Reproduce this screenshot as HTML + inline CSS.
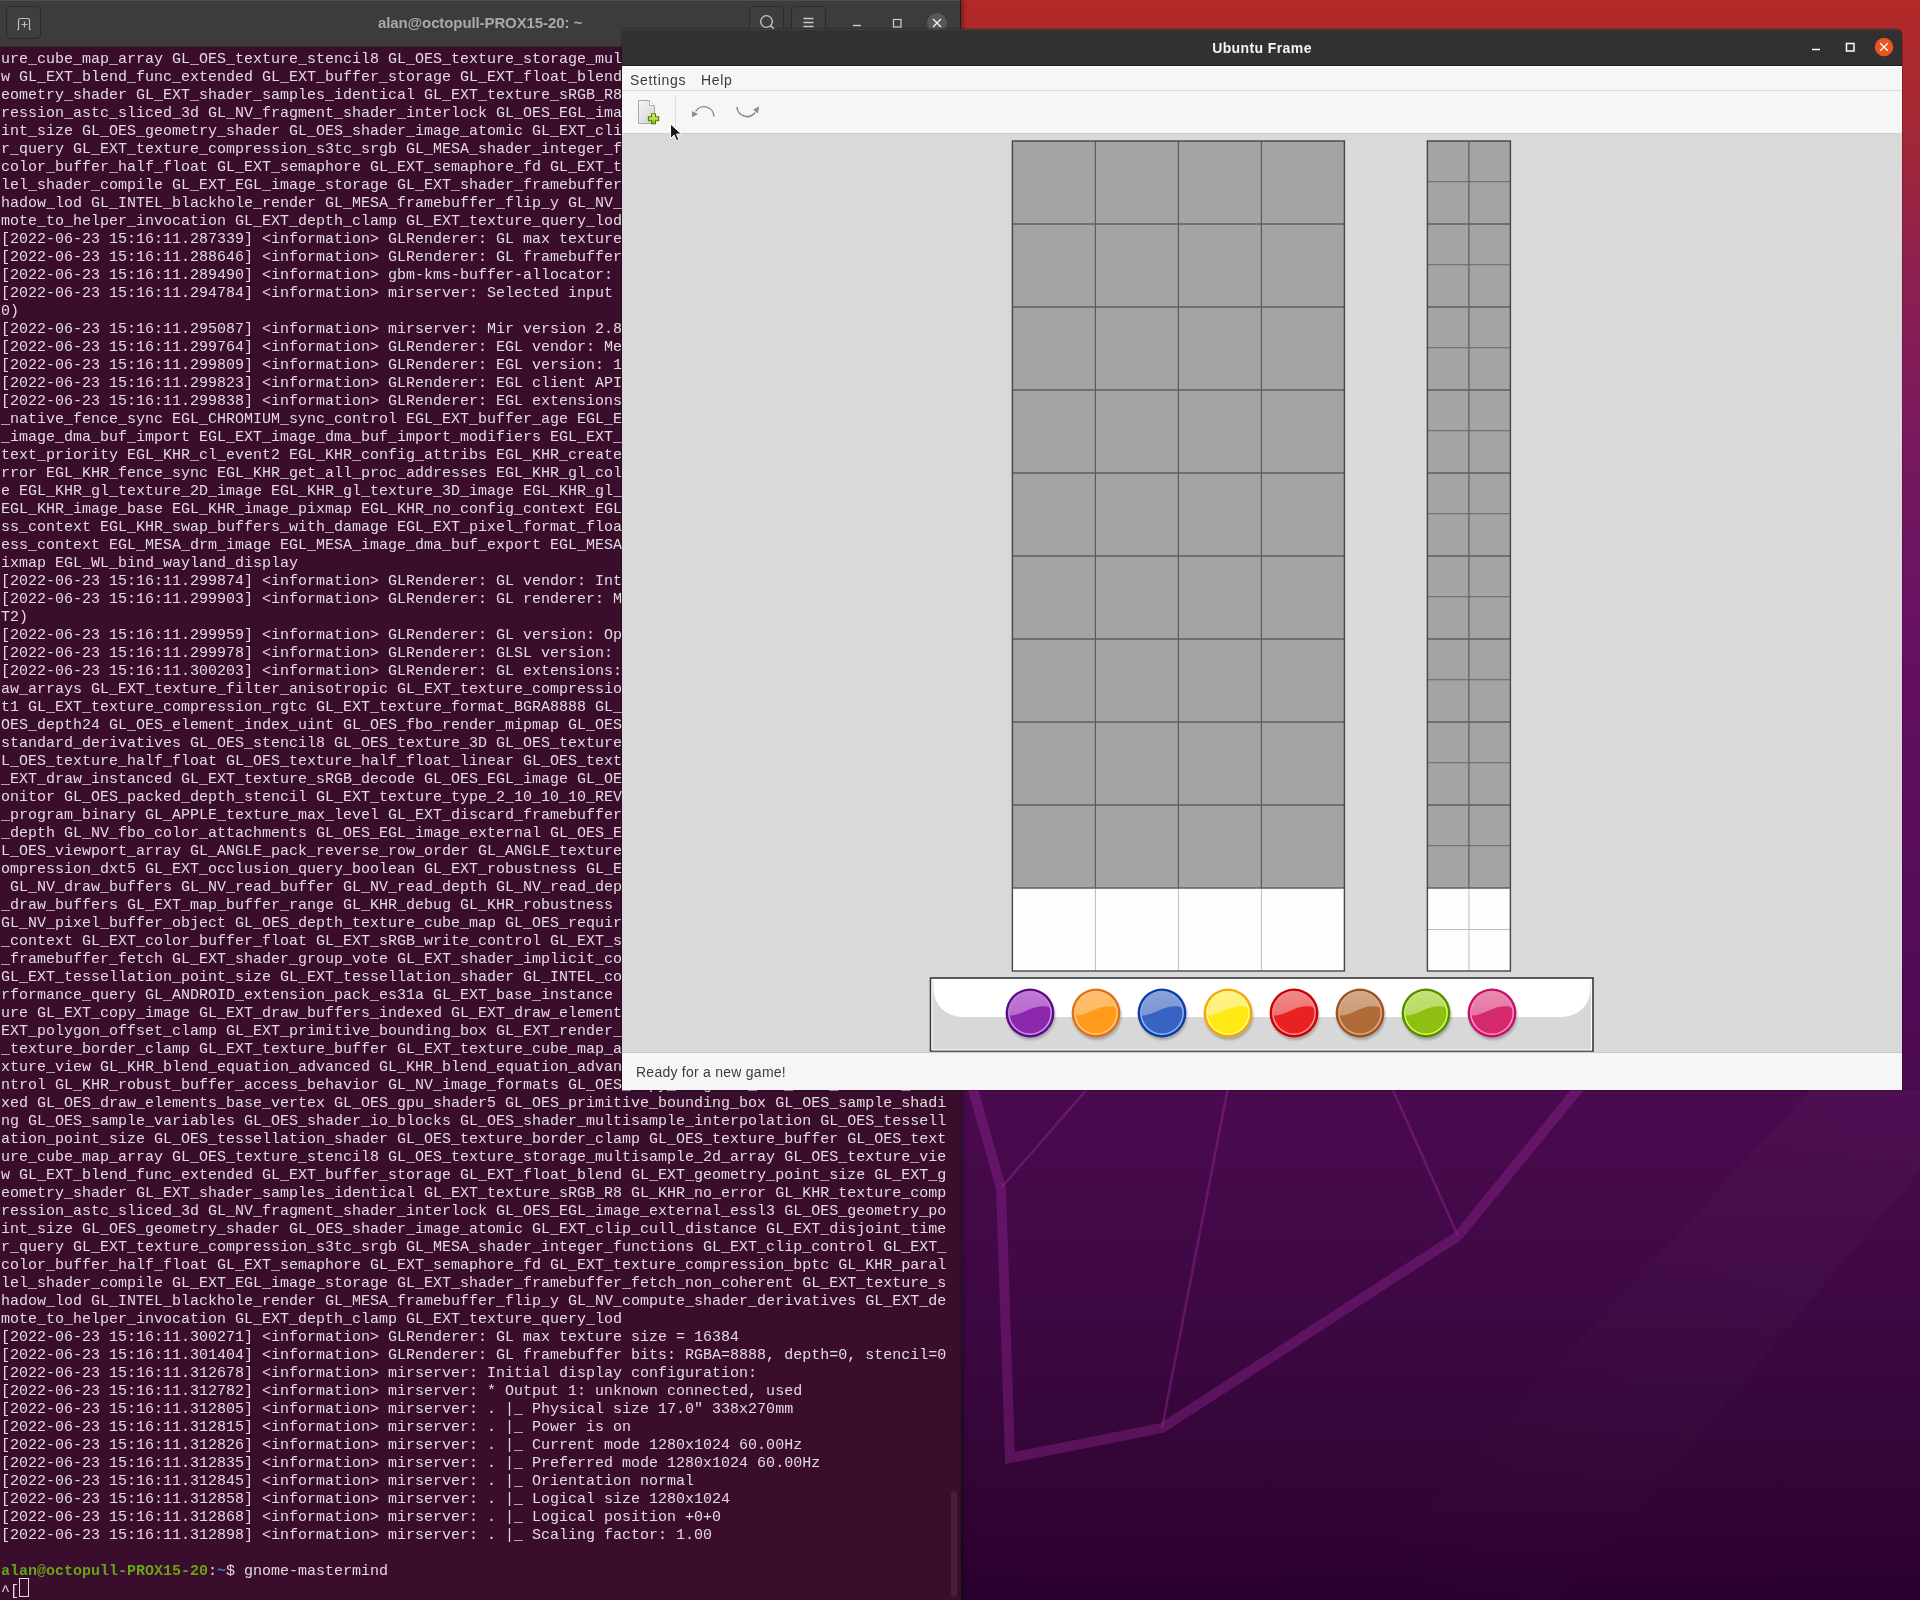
<!DOCTYPE html>
<html><head><meta charset="utf-8">
<style>
*{margin:0;padding:0;box-sizing:border-box}
html,body{width:1920px;height:1600px;overflow:hidden;background:#3a0a40}
body{position:relative;font-family:"Liberation Sans",sans-serif}
.abs{position:absolute}
#desk{left:0;top:0;width:1920px;height:1600px;
 background:linear-gradient(180deg,#b22a28 0px,#a52834 120px,#8e2050 270px,#7c1a5c 410px,#6e1462 550px,#620f62 700px,#5a0d5c 830px,#500b54 1000px,#4a0a4e 1100px,#3e0844 1300px,#340638 1450px,#2a0030 1600px)}
#term{left:0;top:0;width:961px;height:1600px;background:#3a0d2c;border-right:1px solid #1e1a1e;box-shadow:2px 0 5px rgba(0,0,0,0.35)}
#ttb{left:0;top:0;width:960px;height:47px;background:#3c3c3c;border-top:1px solid #4e4e4e;border-bottom:1px solid #2c2c2c}
.tbtn{position:absolute;top:5px;width:35px;height:33px;border:1px solid #2a2a2a;border-radius:5px;background:#3e3e3e}
#ttitle{will-change:transform;left:0;top:13px;width:960px;text-align:center;font-weight:bold;font-size:15px;color:#a9a9a9;letter-spacing:-0.1px}
#tpre{will-change:transform;left:1px;top:51px;font-family:"Liberation Mono",monospace;font-size:15px;line-height:18px;color:#e2dadf;white-space:pre}
.pg{color:#66a416;font-weight:bold}
.pb{color:#4580c8;font-weight:bold}
.cur{display:inline-block;width:10px;height:19px;border:1px solid #e2dadf;vertical-align:-5px;position:relative;top:-3.5px;margin-left:-0.5px}
#sb{left:951px;top:1491px;width:6px;height:106px;border-radius:3px;background:#471e39}
#frame{left:622px;top:29px;width:1280px;height:1061px;border-radius:6px 6px 0 0;overflow:hidden;box-shadow:0 0 0 1px rgba(0,0,0,0.22);}
#ftb{left:0;top:0;width:1280px;height:37px;background:#323031;border-bottom:1px solid #1c1c1c;box-shadow:inset 0 1px 0 rgba(255,255,255,0.08)}
#ftitle{will-change:transform;left:0;top:11px;width:1280px;text-align:center;color:#f4f4f4;font-weight:bold;font-size:14px;letter-spacing:0.4px}
#menu{left:0;top:37px;width:1280px;height:25px;background:#f6f6f6;border-top:1px solid #ffffff;border-bottom:1px solid #dadada}
.mi{will-change:transform;position:absolute;top:5px;font-size:14px;letter-spacing:0.7px;color:#3b3b3b}
#tool{left:0;top:62px;width:1280px;height:43px;background:#f6f6f6;border-bottom:1px solid #cfcfcf}
#status{left:0;top:1023px;width:1280px;height:38px;background:#f6f6f6;border-top:1px solid #c9c9c9}
#stext{will-change:transform;left:14px;top:11px;font-size:14px;letter-spacing:0.25px;color:#3c3c3c}
</style></head><body>
<div id="desk" class="abs">
<svg width="1920" height="1600" style="position:absolute;left:0;top:0">
<defs><linearGradient id="band" x1="1" y1="0" x2="0" y2="1"><stop offset="0" stop-color="#fff" stop-opacity="0.022"/><stop offset="1" stop-color="#fff" stop-opacity="0.0"/></linearGradient></defs>
<polygon points="1810,1090 1920,1090 1920,1170 1560,1600 1340,1600" fill="url(#band)"/>
<g fill="none" stroke-linejoin="miter">
<polyline points="968,1072 1001,1188 1010,1458 1162,1428 1458,1236 1592,1072" stroke="rgb(150,40,150)" stroke-opacity="0.38" stroke-width="10"/>
<line x1="1001" y1="1188" x2="1102" y2="1072" stroke="rgb(150,40,150)" stroke-opacity="0.42" stroke-width="2.6"/>
<line x1="1162" y1="1428" x2="1231" y2="1072" stroke="rgb(150,40,150)" stroke-opacity="0.42" stroke-width="2.6"/>
<line x1="1458" y1="1236" x2="1385" y2="1072" stroke="rgb(150,40,150)" stroke-opacity="0.42" stroke-width="2.6"/>
</g>
</svg>
</div>

<div id="term" class="abs">
 <div id="ttb" class="abs">
  <div class="tbtn" style="left:6px">
   <svg width="35" height="33" style="position:absolute;left:-1px;top:-1px"><path d="M11,23.5 h1.5 v-9 a2,2 0 0 1 2,-2 h7 a2,2 0 0 1 2,2 v9 h1.5" fill="none" stroke="#bdbdbd" stroke-width="1.2"/><path d="M18.5,15.5 v6 M15.5,18.5 h6" stroke="#bdbdbd" stroke-width="1.2"/></svg>
  </div>
  <div id="ttitle" class="abs">alan@octopull-PROX15-20: ~</div>
  <div class="tbtn" style="left:749px">
   <svg width="35" height="33" style="position:absolute;left:-1px;top:-1px"><circle cx="17.5" cy="15.5" r="5.8" fill="none" stroke="#c8c8c8" stroke-width="1.3"/><path d="M21.5,19.5 l3.5,3.5" stroke="#c8c8c8" stroke-width="1.6"/></svg>
  </div>
  <div class="tbtn" style="left:791px">
   <svg width="35" height="33" style="position:absolute;left:-1px;top:-1px"><path d="M12.5,12.5 h10 M12.5,16.5 h10 M12.5,20.5 h10" stroke="#c8c8c8" stroke-width="1.3"/></svg>
  </div>
  <svg width="960" height="46" style="position:absolute;left:0;top:-1px">
   <path d="M853,25.5 h8" stroke="#d0d0d0" stroke-width="1.3"/>
   <rect x="893.5" y="19.5" width="7.5" height="7.5" fill="none" stroke="#d0d0d0" stroke-width="1.2"/>
   <circle cx="937" cy="23" r="10" fill="#575757"/>
   <path d="M933,19 l8,8 M941,19 l-8,8" stroke="#f0f0f0" stroke-width="1.4"/>
  </svg>
 </div>
 <div id="tpre" class="abs">ure_cube_map_array GL_OES_texture_stencil8 GL_OES_texture_storage_multisample_2d_array GL_OES_texture_vie
w GL_EXT_blend_func_extended GL_EXT_buffer_storage GL_EXT_float_blend GL_EXT_geometry_point_size GL_EXT_g
eometry_shader GL_EXT_shader_samples_identical GL_EXT_texture_sRGB_R8 GL_KHR_no_error GL_KHR_texture_comp
ression_astc_sliced_3d GL_NV_fragment_shader_interlock GL_OES_EGL_image_external_essl3 GL_OES_geometry_po
int_size GL_OES_geometry_shader GL_OES_shader_image_atomic GL_EXT_clip_cull_distance GL_EXT_disjoint_time
r_query GL_EXT_texture_compression_s3tc_srgb GL_MESA_shader_integer_functions GL_EXT_clip_control GL_EXT_
color_buffer_half_float GL_EXT_semaphore GL_EXT_semaphore_fd GL_EXT_texture_compression_bptc GL_KHR_paral
lel_shader_compile GL_EXT_EGL_image_storage GL_EXT_shader_framebuffer_fetch_non_coherent GL_EXT_texture_s
hadow_lod GL_INTEL_blackhole_render GL_MESA_framebuffer_flip_y GL_NV_compute_shader_derivatives GL_EXT_de
mote_to_helper_invocation GL_EXT_depth_clamp GL_EXT_texture_query_lod
[2022-06-23 15:16:11.287339] &lt;information&gt; GLRenderer: GL max texture size = 16384
[2022-06-23 15:16:11.288646] &lt;information&gt; GLRenderer: GL framebuffer bits: RGBA=8888, depth=0, stencil=0
[2022-06-23 15:16:11.289490] &lt;information&gt; gbm-kms-buffer-allocator: Failed to initialise EGLStreams: No
[2022-06-23 15:16:11.294784] &lt;information&gt; mirserver: Selected input driver: mir:x11-input (version: 2.8.
0)
[2022-06-23 15:16:11.295087] &lt;information&gt; mirserver: Mir version 2.8.0
[2022-06-23 15:16:11.299764] &lt;information&gt; GLRenderer: EGL vendor: Mesa Project
[2022-06-23 15:16:11.299809] &lt;information&gt; GLRenderer: EGL version: 1.4
[2022-06-23 15:16:11.299823] &lt;information&gt; GLRenderer: EGL client APIs: OpenGL OpenGL_ES
[2022-06-23 15:16:11.299838] &lt;information&gt; GLRenderer: EGL extensions: EGL_ANDROID_blob_cache EGL_ANDROID
_native_fence_sync EGL_CHROMIUM_sync_control EGL_EXT_buffer_age EGL_EXT_create_context_robustness EGL_EXT
_image_dma_buf_import EGL_EXT_image_dma_buf_import_modifiers EGL_EXT_swap_buffers_with_damage EGL_IMG_con
text_priority EGL_KHR_cl_event2 EGL_KHR_config_attribs EGL_KHR_create_context EGL_KHR_create_context_no_e
rror EGL_KHR_fence_sync EGL_KHR_get_all_proc_addresses EGL_KHR_gl_colorspace EGL_KHR_gl_renderbuffer_imag
e EGL_KHR_gl_texture_2D_image EGL_KHR_gl_texture_3D_image EGL_KHR_gl_texture_cubemap_image EGL_KHR_image 
EGL_KHR_image_base EGL_KHR_image_pixmap EGL_KHR_no_config_context EGL_KHR_reusable_sync EGL_KHR_surfacele
ss_context EGL_KHR_swap_buffers_with_damage EGL_EXT_pixel_format_float EGL_KHR_wait_sync EGL_MESA_configl
ess_context EGL_MESA_drm_image EGL_MESA_image_dma_buf_export EGL_MESA_query_driver EGL_NOK_texture_from_p
ixmap EGL_WL_bind_wayland_display
[2022-06-23 15:16:11.299874] &lt;information&gt; GLRenderer: GL vendor: Intel
[2022-06-23 15:16:11.299903] &lt;information&gt; GLRenderer: GL renderer: Mesa Intel(R) UHD Graphics 620 (KBL G
T2)
[2022-06-23 15:16:11.299959] &lt;information&gt; GLRenderer: GL version: OpenGL ES 3.2 Mesa 21.2.6
[2022-06-23 15:16:11.299978] &lt;information&gt; GLRenderer: GLSL version: OpenGL ES GLSL ES 3.20
[2022-06-23 15:16:11.300203] &lt;information&gt; GLRenderer: GL extensions: GL_EXT_blend_minmax GL_EXT_multi_dr
aw_arrays GL_EXT_texture_filter_anisotropic GL_EXT_texture_compression_dxt1 GL_EXT_texture_compression_dx
t1 GL_EXT_texture_compression_rgtc GL_EXT_texture_format_BGRA8888 GL_OES_compressed_ETC1_RGB8_texture GL_
OES_depth24 GL_OES_element_index_uint GL_OES_fbo_render_mipmap GL_OES_mapbuffer GL_OES_rgb8_rgba8 GL_OES_
standard_derivatives GL_OES_stencil8 GL_OES_texture_3D GL_OES_texture_float GL_OES_texture_float_linear G
L_OES_texture_half_float GL_OES_texture_half_float_linear GL_OES_texture_npot GL_OES_vertex_half_float GL
_EXT_draw_instanced GL_EXT_texture_sRGB_decode GL_OES_EGL_image GL_OES_depth_texture GL_AMD_performance_m
onitor GL_OES_packed_depth_stencil GL_EXT_texture_type_2_10_10_10_REV GL_NV_conditional_render GL_OES_get
_program_binary GL_APPLE_texture_max_level GL_EXT_discard_framebuffer GL_EXT_read_format_bgra GL_NV_pack
_depth GL_NV_fbo_color_attachments GL_OES_EGL_image_external GL_OES_EGL_sync GL_OES_vertex_array_object G
L_OES_viewport_array GL_ANGLE_pack_reverse_row_order GL_ANGLE_texture_compression_dxt3 GL_ANGLE_texture_c
ompression_dxt5 GL_EXT_occlusion_query_boolean GL_EXT_robustness GL_EXT_texture_rg GL_EXT_unpack_subimage
 GL_NV_draw_buffers GL_NV_read_buffer GL_NV_read_depth GL_NV_read_depth_stencil GL_NV_read_stencil GL_EXT
_draw_buffers GL_EXT_map_buffer_range GL_KHR_debug GL_KHR_robustness GL_KHR_texture_compression_astc_ldr 
GL_NV_pixel_buffer_object GL_OES_depth_texture_cube_map GL_OES_required_internalformat GL_OES_surfaceless
_context GL_EXT_color_buffer_float GL_EXT_sRGB_write_control GL_EXT_separate_shader_objects GL_EXT_shader
_framebuffer_fetch GL_EXT_shader_group_vote GL_EXT_shader_implicit_conversions GL_EXT_shader_integer_mix 
GL_EXT_tessellation_point_size GL_EXT_tessellation_shader GL_INTEL_conservative_rasterization GL_INTEL_pe
rformance_query GL_ANDROID_extension_pack_es31a GL_EXT_base_instance GL_EXT_compressed_ETC1_RGB8_sub_text
ure GL_EXT_copy_image GL_EXT_draw_buffers_indexed GL_EXT_draw_elements_base_vertex GL_EXT_gpu_shader5 GL_
EXT_polygon_offset_clamp GL_EXT_primitive_bounding_box GL_EXT_render_snorm GL_EXT_shader_io_blocks GL_EXT
_texture_border_clamp GL_EXT_texture_buffer GL_EXT_texture_cube_map_array GL_EXT_texture_norm16 GL_EXT_te
xture_view GL_KHR_blend_equation_advanced GL_KHR_blend_equation_advanced_coherent GL_KHR_context_flush_co
ntrol GL_KHR_robust_buffer_access_behavior GL_NV_image_formats GL_OES_copy_image GL_OES_draw_buffers_inde
xed GL_OES_draw_elements_base_vertex GL_OES_gpu_shader5 GL_OES_primitive_bounding_box GL_OES_sample_shadi
ng GL_OES_sample_variables GL_OES_shader_io_blocks GL_OES_shader_multisample_interpolation GL_OES_tessell
ation_point_size GL_OES_tessellation_shader GL_OES_texture_border_clamp GL_OES_texture_buffer GL_OES_text
ure_cube_map_array GL_OES_texture_stencil8 GL_OES_texture_storage_multisample_2d_array GL_OES_texture_vie
w GL_EXT_blend_func_extended GL_EXT_buffer_storage GL_EXT_float_blend GL_EXT_geometry_point_size GL_EXT_g
eometry_shader GL_EXT_shader_samples_identical GL_EXT_texture_sRGB_R8 GL_KHR_no_error GL_KHR_texture_comp
ression_astc_sliced_3d GL_NV_fragment_shader_interlock GL_OES_EGL_image_external_essl3 GL_OES_geometry_po
int_size GL_OES_geometry_shader GL_OES_shader_image_atomic GL_EXT_clip_cull_distance GL_EXT_disjoint_time
r_query GL_EXT_texture_compression_s3tc_srgb GL_MESA_shader_integer_functions GL_EXT_clip_control GL_EXT_
color_buffer_half_float GL_EXT_semaphore GL_EXT_semaphore_fd GL_EXT_texture_compression_bptc GL_KHR_paral
lel_shader_compile GL_EXT_EGL_image_storage GL_EXT_shader_framebuffer_fetch_non_coherent GL_EXT_texture_s
hadow_lod GL_INTEL_blackhole_render GL_MESA_framebuffer_flip_y GL_NV_compute_shader_derivatives GL_EXT_de
mote_to_helper_invocation GL_EXT_depth_clamp GL_EXT_texture_query_lod
[2022-06-23 15:16:11.300271] &lt;information&gt; GLRenderer: GL max texture size = 16384
[2022-06-23 15:16:11.301404] &lt;information&gt; GLRenderer: GL framebuffer bits: RGBA=8888, depth=0, stencil=0
[2022-06-23 15:16:11.312678] &lt;information&gt; mirserver: Initial display configuration:
[2022-06-23 15:16:11.312782] &lt;information&gt; mirserver: * Output 1: unknown connected, used
[2022-06-23 15:16:11.312805] &lt;information&gt; mirserver: . |_ Physical size 17.0" 338x270mm
[2022-06-23 15:16:11.312815] &lt;information&gt; mirserver: . |_ Power is on
[2022-06-23 15:16:11.312826] &lt;information&gt; mirserver: . |_ Current mode 1280x1024 60.00Hz
[2022-06-23 15:16:11.312835] &lt;information&gt; mirserver: . |_ Preferred mode 1280x1024 60.00Hz
[2022-06-23 15:16:11.312845] &lt;information&gt; mirserver: . |_ Orientation normal
[2022-06-23 15:16:11.312858] &lt;information&gt; mirserver: . |_ Logical size 1280x1024
[2022-06-23 15:16:11.312868] &lt;information&gt; mirserver: . |_ Logical position +0+0
[2022-06-23 15:16:11.312898] &lt;information&gt; mirserver: . |_ Scaling factor: 1.00

<span class="pg">alan@octopull-PROX15-20</span>:<span class="pb">~</span>$ gnome-mastermind
^[<span class="cur"></span></div>
 <div id="sb" class="abs"></div>
</div>

<div id="frame" class="abs">
 <div id="ftb" class="abs">
  <div id="ftitle" class="abs">Ubuntu Frame</div>
  <svg width="1280" height="37" style="position:absolute;left:0;top:0">
   <path d="M1190,20.5 h8" stroke="#fff" stroke-width="1.5"/>
   <rect x="1224.5" y="14.5" width="7.5" height="7.5" fill="none" stroke="#fff" stroke-width="1.5"/>
   <circle cx="1262" cy="18" r="9.2" fill="#e95420"/>
   <path d="M1258.2,14.2 l7.6,7.6 M1265.8,14.2 l-7.6,7.6" stroke="#fff" stroke-width="1.3"/>
  </svg>
 </div>
 <div id="menu" class="abs">
  <div class="mi" style="left:8px">Settings</div>
  <div class="mi" style="left:79px">Help</div>
 </div>
 <div id="tool" class="abs">
  <svg width="1280" height="42" style="position:absolute;left:0;top:0">
   <defs><linearGradient id="doc" x1="0" y1="0" x2="1" y2="1"><stop offset="0" stop-color="#f4f4f4"/><stop offset="1" stop-color="#d4d4d4"/></linearGradient>
   <linearGradient id="plus" x1="0" y1="0" x2="0" y2="1"><stop offset="0" stop-color="#e4f890"/><stop offset="0.5" stop-color="#b4dc48"/><stop offset="1" stop-color="#80b820"/></linearGradient></defs>
   <path d="M16.5,9.5 h11 l5,5 v18 h-16 z" fill="url(#doc)" stroke="#a8a8a8" stroke-width="1"/>
   <path d="M27.5,9.5 v5 h5" fill="#fff" stroke="#b8b8b8" stroke-width="1"/>
   <path d="M29.6,22.7 h3.9 v3.1 h3.2 v3.9 h-3.2 v3.1 h-3.9 v-3.1 h-3.2 v-3.9 h3.2 z" fill="url(#plus)" stroke="#4a8200" stroke-width="1.1"/>
   <path d="M53.5,4 v38" stroke="#dedede" stroke-width="1"/>
   <path d="M92,25.5 A10,10 0 0 0 73.6,20.3" fill="none" stroke="#8a8a8a" stroke-width="1.5"/>
   <path d="M69.8,20 L70.2,26.2 L76,23 z" fill="#8a8a8a"/>
   <path d="M115,16 A10,10 0 0 0 133,21.5" fill="none" stroke="#8a8a8a" stroke-width="1.5"/>
   <path d="M137.2,15.6 L131.2,18.6 L135.8,22.6 z" fill="#8a8a8a"/>
  </svg>
 </div>
 <div class="abs" style="left:0;top:105px;width:1280px;height:918px;background:#d9d9d9"></div>
 <svg width="1280" height="1061" style="position:absolute;left:0;top:0">
  <rect x="390.4" y="112" width="332" height="747" fill="#a4a4a4"/>
<rect x="390.4" y="859" width="332" height="83" fill="#fefefe"/>
<line x1="473.4" y1="112" x2="473.4" y2="859" stroke="#5c5c5c" stroke-width="1.2"/>
<line x1="473.4" y1="859" x2="473.4" y2="942" stroke="#bdbdbd" stroke-width="1"/>
<line x1="556.4" y1="112" x2="556.4" y2="859" stroke="#5c5c5c" stroke-width="1.2"/>
<line x1="556.4" y1="859" x2="556.4" y2="942" stroke="#bdbdbd" stroke-width="1"/>
<line x1="639.4" y1="112" x2="639.4" y2="859" stroke="#5c5c5c" stroke-width="1.2"/>
<line x1="639.4" y1="859" x2="639.4" y2="942" stroke="#bdbdbd" stroke-width="1"/>
<line x1="390.4" y1="195" x2="722.4" y2="195" stroke="#5e5e5e" stroke-width="1.6"/>
<line x1="390.4" y1="278" x2="722.4" y2="278" stroke="#5e5e5e" stroke-width="1.6"/>
<line x1="390.4" y1="361" x2="722.4" y2="361" stroke="#5e5e5e" stroke-width="1.6"/>
<line x1="390.4" y1="444" x2="722.4" y2="444" stroke="#5e5e5e" stroke-width="1.6"/>
<line x1="390.4" y1="527" x2="722.4" y2="527" stroke="#5e5e5e" stroke-width="1.6"/>
<line x1="390.4" y1="610" x2="722.4" y2="610" stroke="#5e5e5e" stroke-width="1.6"/>
<line x1="390.4" y1="693" x2="722.4" y2="693" stroke="#5e5e5e" stroke-width="1.6"/>
<line x1="390.4" y1="776" x2="722.4" y2="776" stroke="#5e5e5e" stroke-width="1.6"/>
<line x1="390.4" y1="859" x2="722.4" y2="859" stroke="#5e5e5e" stroke-width="1.6"/>
<rect x="390.4" y="112" width="332" height="830" fill="none" stroke="#454545" stroke-width="1.4"/>
<rect x="805.4" y="112" width="83" height="747" fill="#a4a4a4"/>
<rect x="805.4" y="859" width="83" height="83" fill="#fefefe"/>
<line x1="846.9" y1="112" x2="846.9" y2="859" stroke="#5c5c5c" stroke-width="1.2"/>
<line x1="846.9" y1="859" x2="846.9" y2="942" stroke="#bdbdbd" stroke-width="1"/>
<line x1="805.4" y1="152.75" x2="888.4" y2="152.75" stroke="#666" stroke-width="1"/>
<line x1="805.4" y1="195.0" x2="888.4" y2="195.0" stroke="#5e5e5e" stroke-width="1.6"/>
<line x1="805.4" y1="235.75" x2="888.4" y2="235.75" stroke="#666" stroke-width="1"/>
<line x1="805.4" y1="278.0" x2="888.4" y2="278.0" stroke="#5e5e5e" stroke-width="1.6"/>
<line x1="805.4" y1="318.75" x2="888.4" y2="318.75" stroke="#666" stroke-width="1"/>
<line x1="805.4" y1="361.0" x2="888.4" y2="361.0" stroke="#5e5e5e" stroke-width="1.6"/>
<line x1="805.4" y1="401.75" x2="888.4" y2="401.75" stroke="#666" stroke-width="1"/>
<line x1="805.4" y1="444.0" x2="888.4" y2="444.0" stroke="#5e5e5e" stroke-width="1.6"/>
<line x1="805.4" y1="484.75" x2="888.4" y2="484.75" stroke="#666" stroke-width="1"/>
<line x1="805.4" y1="527.0" x2="888.4" y2="527.0" stroke="#5e5e5e" stroke-width="1.6"/>
<line x1="805.4" y1="567.75" x2="888.4" y2="567.75" stroke="#666" stroke-width="1"/>
<line x1="805.4" y1="610.0" x2="888.4" y2="610.0" stroke="#5e5e5e" stroke-width="1.6"/>
<line x1="805.4" y1="650.75" x2="888.4" y2="650.75" stroke="#666" stroke-width="1"/>
<line x1="805.4" y1="693.0" x2="888.4" y2="693.0" stroke="#5e5e5e" stroke-width="1.6"/>
<line x1="805.4" y1="733.75" x2="888.4" y2="733.75" stroke="#666" stroke-width="1"/>
<line x1="805.4" y1="776.0" x2="888.4" y2="776.0" stroke="#5e5e5e" stroke-width="1.6"/>
<line x1="805.4" y1="816.75" x2="888.4" y2="816.75" stroke="#666" stroke-width="1"/>
<line x1="805.4" y1="859.0" x2="888.4" y2="859.0" stroke="#5e5e5e" stroke-width="1.6"/>
<line x1="805.4" y1="900.5" x2="888.4" y2="900.5" stroke="#bdbdbd" stroke-width="1"/>
<rect x="805.4" y="112" width="83" height="830" fill="none" stroke="#454545" stroke-width="1.4"/>
  <rect x="308.5" y="949" width="662.5" height="73" fill="#d8d8d8" stroke="#3c3c3c" stroke-width="1.6"/>
  <path d="M310,950.5 h660" stroke="#fff" stroke-width="1"/>
  <path d="M310,950 v71 M969.5,950 v71 M310,1021 h660" stroke="#fff" stroke-width="1"/>
  <path d="M311.5,950 h657 v10 a28,28 0 0 1 -28,28 h-601 a28,28 0 0 1 -28,-28 z" fill="#ffffff"/>
  <defs><filter id="bl" x="-20%" y="-20%" width="140%" height="140%"><feGaussianBlur stdDeviation="1.3"/></filter></defs><g transform="translate(408,984)">
<circle cx="1" cy="2.5" r="24.5" fill="#000" opacity="0.22" filter="url(#bl)"/>
<circle r="24.4" fill="#5c0a86"/>
<circle r="21.9" fill="#c9a0f0"/>
<circle r="20.5" fill="#8d27ae"/>
<defs><linearGradient id="hg0" x1="0" y1="0" x2="0" y2="1"><stop offset="0" stop-color="#c07ad6"/><stop offset="1" stop-color="#c07ad6" stop-opacity="0.8"/></linearGradient></defs>
<path d="M-20.5,2.5 A20.6,20.6 0 0 1 20,-5.5 C14,-8 6,-7 -2,-3 C-9,0.5 -15,2.5 -20.5,2.5 Z" fill="url(#hg0)"/>
</g>
<g transform="translate(474,984)">
<circle cx="1" cy="2.5" r="24.5" fill="#000" opacity="0.22" filter="url(#bl)"/>
<circle r="24.4" fill="#e0701a"/>
<circle r="21.9" fill="#ffd08a"/>
<circle r="20.5" fill="#ff9c1c"/>
<defs><linearGradient id="hg1" x1="0" y1="0" x2="0" y2="1"><stop offset="0" stop-color="#ffc070"/><stop offset="1" stop-color="#ffc070" stop-opacity="0.8"/></linearGradient></defs>
<path d="M-20.5,2.5 A20.6,20.6 0 0 1 20,-5.5 C14,-8 6,-7 -2,-3 C-9,0.5 -15,2.5 -20.5,2.5 Z" fill="url(#hg1)"/>
</g>
<g transform="translate(540,984)">
<circle cx="1" cy="2.5" r="24.5" fill="#000" opacity="0.22" filter="url(#bl)"/>
<circle r="24.4" fill="#0c3ca8"/>
<circle r="21.9" fill="#9ab8f4"/>
<circle r="20.5" fill="#3763c2"/>
<defs><linearGradient id="hg2" x1="0" y1="0" x2="0" y2="1"><stop offset="0" stop-color="#8aa2d8"/><stop offset="1" stop-color="#8aa2d8" stop-opacity="0.8"/></linearGradient></defs>
<path d="M-20.5,2.5 A20.6,20.6 0 0 1 20,-5.5 C14,-8 6,-7 -2,-3 C-9,0.5 -15,2.5 -20.5,2.5 Z" fill="url(#hg2)"/>
</g>
<g transform="translate(606,984)">
<circle cx="1" cy="2.5" r="24.5" fill="#000" opacity="0.22" filter="url(#bl)"/>
<circle r="24.4" fill="#f7a800"/>
<circle r="21.9" fill="#ffff90"/>
<circle r="20.5" fill="#ffea16"/>
<defs><linearGradient id="hg3" x1="0" y1="0" x2="0" y2="1"><stop offset="0" stop-color="#fff28a"/><stop offset="1" stop-color="#fff28a" stop-opacity="0.8"/></linearGradient></defs>
<path d="M-20.5,2.5 A20.6,20.6 0 0 1 20,-5.5 C14,-8 6,-7 -2,-3 C-9,0.5 -15,2.5 -20.5,2.5 Z" fill="url(#hg3)"/>
</g>
<g transform="translate(672,984)">
<circle cx="1" cy="2.5" r="24.5" fill="#000" opacity="0.22" filter="url(#bl)"/>
<circle r="24.4" fill="#cc0000"/>
<circle r="21.9" fill="#ff9a9a"/>
<circle r="20.5" fill="#e82222"/>
<defs><linearGradient id="hg4" x1="0" y1="0" x2="0" y2="1"><stop offset="0" stop-color="#f08888"/><stop offset="1" stop-color="#f08888" stop-opacity="0.8"/></linearGradient></defs>
<path d="M-20.5,2.5 A20.6,20.6 0 0 1 20,-5.5 C14,-8 6,-7 -2,-3 C-9,0.5 -15,2.5 -20.5,2.5 Z" fill="url(#hg4)"/>
</g>
<g transform="translate(738,984)">
<circle cx="1" cy="2.5" r="24.5" fill="#000" opacity="0.22" filter="url(#bl)"/>
<circle r="24.4" fill="#9a5424"/>
<circle r="21.9" fill="#e8b088"/>
<circle r="20.5" fill="#b06a38"/>
<defs><linearGradient id="hg5" x1="0" y1="0" x2="0" y2="1"><stop offset="0" stop-color="#d4a888"/><stop offset="1" stop-color="#d4a888" stop-opacity="0.8"/></linearGradient></defs>
<path d="M-20.5,2.5 A20.6,20.6 0 0 1 20,-5.5 C14,-8 6,-7 -2,-3 C-9,0.5 -15,2.5 -20.5,2.5 Z" fill="url(#hg5)"/>
</g>
<g transform="translate(804,984)">
<circle cx="1" cy="2.5" r="24.5" fill="#000" opacity="0.22" filter="url(#bl)"/>
<circle r="24.4" fill="#568c00"/>
<circle r="21.9" fill="#e0ff60"/>
<circle r="20.5" fill="#8fbf10"/>
<defs><linearGradient id="hg6" x1="0" y1="0" x2="0" y2="1"><stop offset="0" stop-color="#c4e078"/><stop offset="1" stop-color="#c4e078" stop-opacity="0.8"/></linearGradient></defs>
<path d="M-20.5,2.5 A20.6,20.6 0 0 1 20,-5.5 C14,-8 6,-7 -2,-3 C-9,0.5 -15,2.5 -20.5,2.5 Z" fill="url(#hg6)"/>
</g>
<g transform="translate(870,984)">
<circle cx="1" cy="2.5" r="24.5" fill="#000" opacity="0.22" filter="url(#bl)"/>
<circle r="24.4" fill="#c8106a"/>
<circle r="21.9" fill="#ff9ac8"/>
<circle r="20.5" fill="#d42a6c"/>
<defs><linearGradient id="hg7" x1="0" y1="0" x2="0" y2="1"><stop offset="0" stop-color="#e88ab0"/><stop offset="1" stop-color="#e88ab0" stop-opacity="0.8"/></linearGradient></defs>
<path d="M-20.5,2.5 A20.6,20.6 0 0 1 20,-5.5 C14,-8 6,-7 -2,-3 C-9,0.5 -15,2.5 -20.5,2.5 Z" fill="url(#hg7)"/>
</g>
 </svg>
 <div id="status" class="abs"><div id="stext" class="abs">Ready for a new game!</div></div>
 <svg width="20" height="22" style="position:absolute;left:47px;top:94px">
  <path d="M1.5,1 v14.5 l3.6,-3.4 l2.4,5.6 l2.4,-1 l-2.4,-5.6 h5 z" fill="#1a1a1a" stroke="#fff" stroke-width="1"/>
 </svg>
</div>
</body></html>
